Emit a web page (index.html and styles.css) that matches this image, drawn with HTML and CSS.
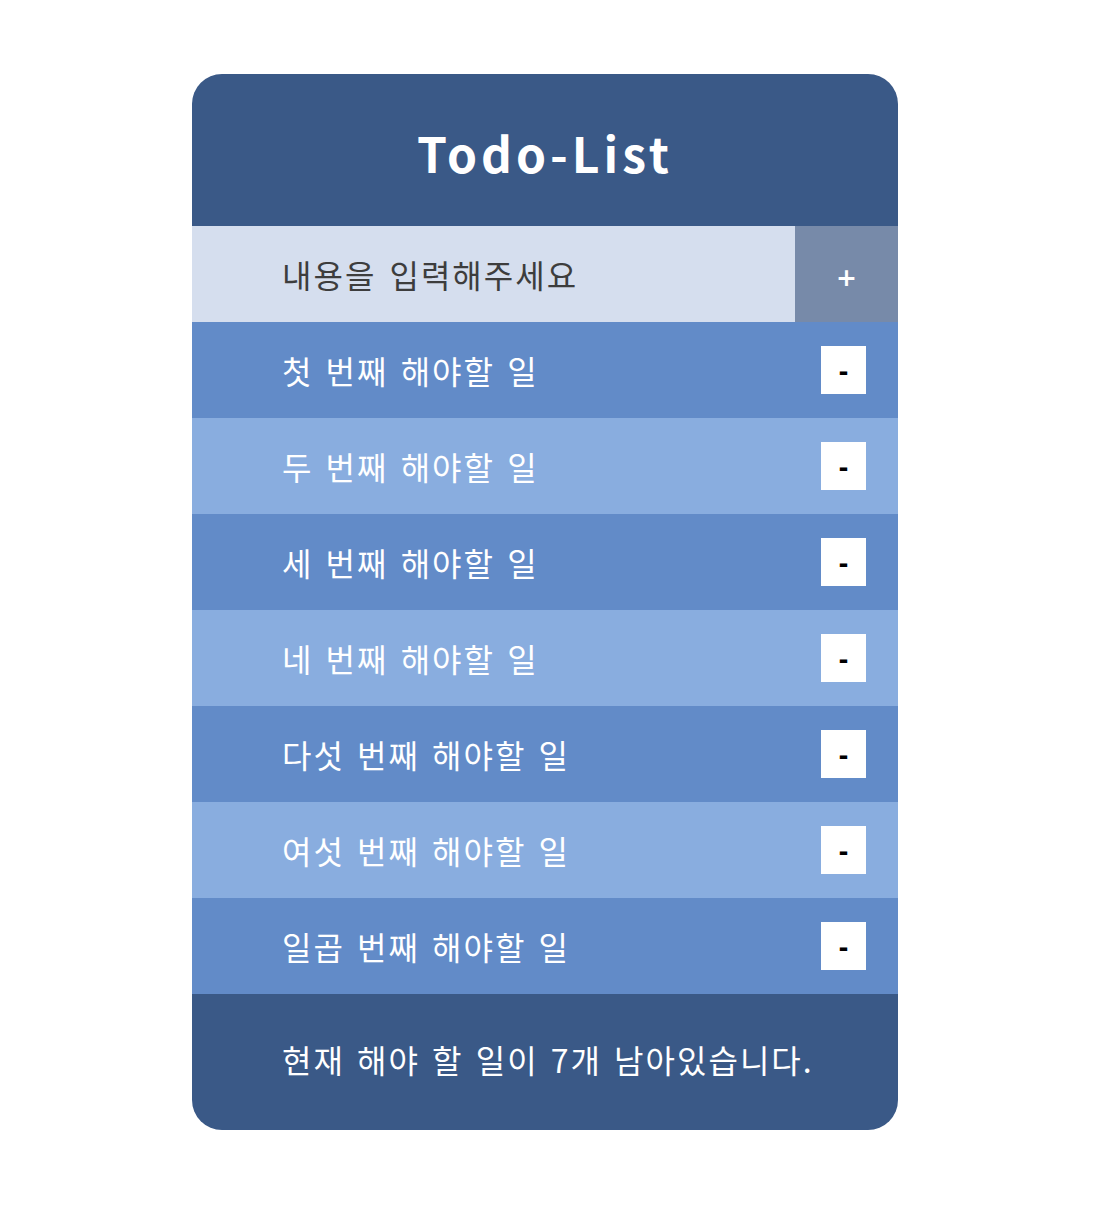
FILE: index.html
```html
<!DOCTYPE html>
<html>
<head>
    <title>Todo-List</title>
    <link rel="stylesheet" href="styles.css">
</head>
<body>
    <div class="todo">
        <header class="todo-header">Todo-List</header>
        <div class="todo-input">
            <input type="text" placeholder="내용을 입력해주세요">
            <button class="add-button">+</button>
        </div>
        <ul class="todo-list">
            <li class="todo-item"><span>첫 번째 해야할 일</span><button class="remove-button">-</button></li>
            <li class="todo-item"><span>두 번째 해야할 일</span><button class="remove-button">-</button></li>
            <li class="todo-item"><span>세 번째 해야할 일</span><button class="remove-button">-</button></li>
            <li class="todo-item"><span>네 번째 해야할 일</span><button class="remove-button">-</button></li>
            <li class="todo-item"><span>다섯 번째 해야할 일</span><button class="remove-button">-</button></li>
            <li class="todo-item"><span>여섯 번째 해야할 일</span><button class="remove-button">-</button></li>
            <li class="todo-item"><span>일곱 번째 해야할 일</span><button class="remove-button">-</button></li>
        </ul>
        <footer class="todo-footer">현재 해야 할 일이 7개 남아있습니다.</footer>
    </div>
</body>
</html>
```

FILE: styles.css
```css
body {
    margin: 0;
    font-family: "Noto Sans CJK KR", "Noto Sans", sans-serif;
    background-color: #ffffff;
}

.todo {
    width: 706px;
    margin: 74px 0 0 192px;
    border-radius: 30px;
    overflow: hidden;
    background-color: #3a5987;
}

.todo-header {
    height: 152px;
    display: flex;
    justify-content: center;
    align-items: center;
    color: #ffffff;
    font-size: 48px;
    font-weight: bold;
    letter-spacing: 4px;
    padding-top: 4px;
    box-sizing: border-box;
}

.todo-input {
    display: flex;
    height: 96px;
    background-color: #d5deee;
}

.todo-input input {
    flex: 1;
    min-width: 0;
    border: none;
    background: none;
    padding: 0 0 0 90px;
    font-family: inherit;
    font-size: 32px;
    letter-spacing: 2px;
    word-spacing: 4px;
    color: #3d3d3d;
    outline: none;
}

.todo-input input::placeholder {
    color: #3d3d3d;
}

.add-button {
    width: 103px;
    border: none;
    background-color: #778aa9;
    color: #ffffff;
    font-size: 25px;
    font-weight: bold;
    padding: 6px 0 0 0;
    font-family: "DejaVu Sans", sans-serif;
}

.todo-list {
    list-style: none;
    margin: 0;
    padding: 0;
}

.todo-item {
    height: 96px;
    display: flex;
    align-items: center;
    justify-content: space-between;
    padding: 0 32px 0 90px;
    color: #ffffff;
    font-size: 32px;
    letter-spacing: 2px;
    word-spacing: 3px;
    background-color: #628bc8;
}

.todo-item:nth-child(even) {
    background-color: #89addf;
}

.remove-button {
    width: 45px;
    height: 48px;
    border: none;
    background-color: #ffffff;
    color: #000000;
    font-size: 24px;
    font-weight: bold;
    padding: 4px 0 0 0;
    letter-spacing: 0;
    font-family: "DejaVu Sans", sans-serif;
}

.todo-footer {
    height: 136px;
    display: flex;
    align-items: center;
    padding: 0 0 6px 90px;
    box-sizing: border-box;
    color: #ffffff;
    font-size: 32px;
    letter-spacing: 2px;
    word-spacing: 3px;
}
```
